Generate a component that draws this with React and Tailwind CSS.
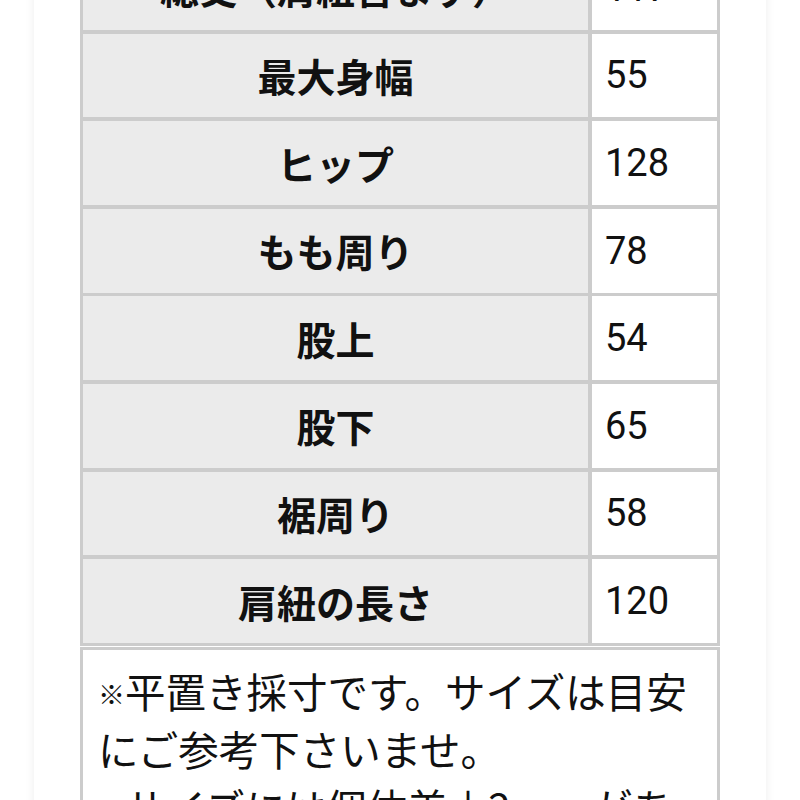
import React from "react";

const rows = [
  ["総丈（肩紐含まず）", "117"],
  ["最大身幅", "55"],
  ["ヒップ", "128"],
  ["もも周り", "78"],
  ["股上", "54"],
  ["股下", "65"],
  ["裾周り", "58"],
  ["肩紐の長さ", "120"],
];

function Mark() {
  return <span className="inline-block w-[27px] text-[27px] align-[3px] leading-none">※</span>;
}

export default function App() {
  return (
    <div className="h-[800px] overflow-hidden bg-white">
      <div className="mx-[34px] h-[900px] bg-white shadow-[0_0_10px_rgba(0,0,0,0.07)] px-[46px]">
        <div className="mt-[-57px] bg-[#cccccc] p-[3px]">
          <div className="grid grid-cols-[505px_1fr] gap-x-[4px] gap-y-[3.8px]">
            {rows.map(([label, value]) => (
              <React.Fragment key={label}>
                <div className="h-[83.8px] bg-[#ebebeb] flex items-center justify-center font-bold text-[39px] text-[#111] [font-family:'Noto_Sans_CJK_JP',sans-serif] leading-none">
                  {label}
                </div>
                <div className="h-[83.8px] bg-white flex items-center pl-[13px] text-[38px] text-[#111] [font-family:Roboto,'Noto_Sans_CJK_JP',sans-serif] leading-none">
                  {value}
                </div>
              </React.Fragment>
            ))}
          </div>
        </div>
        <div className="mt-[1px] border-[3px] border-[#cccccc] bg-white pl-[15px] pr-[18px] pt-[12px] pb-[20px] text-[40.5px] leading-[58px] font-normal text-[#111] [font-family:'Noto_Sans_CJK_JP',sans-serif]">
          <p><Mark />平置き採寸です。サイズは目安にご参考下さいませ。</p>
          <p><Mark />サイズには個体差±2ｃｍがあります。</p>
        </div>
      </div>
    </div>
  );
}
